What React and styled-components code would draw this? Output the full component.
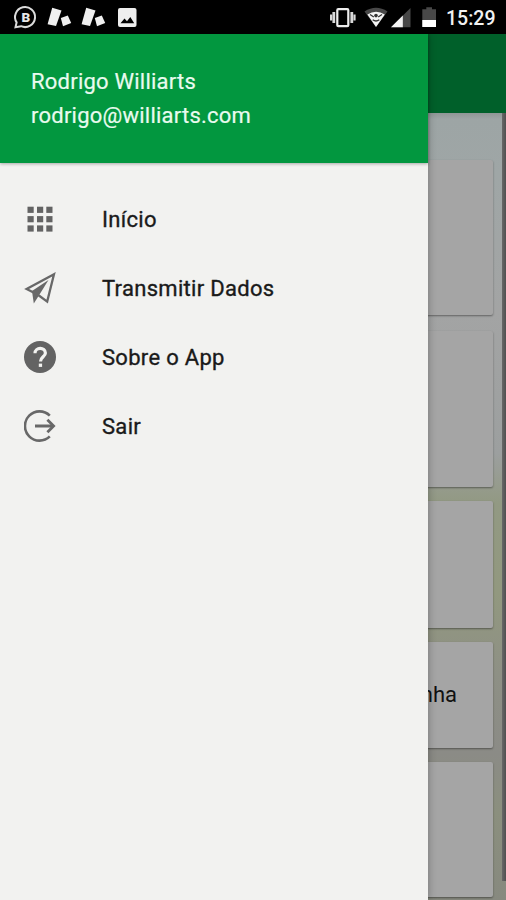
import React from "react"
import styled, { createGlobalStyle } from "styled-components"

const cards = [
  { height: 155, gap: 0 },
  { height: 156, gap: 16 },
  { height: 127, gap: 14 },
  { height: 106, gap: 14, label: "Senha da Minha" },
  { height: 135, gap: 14 },
]

const GridIcon = () => (
  <svg width="32" height="32" viewBox="0 0 32 32" fill="#636363">
    {[3.7, 13.1, 22.4].map(y =>
      [3.5, 13, 22.3].map(x => (
        <rect key={`${x}-${y}`} x={x} y={y} width="6.2" height="6.2" />
      ))
    )}
  </svg>
)

const PlaneIcon = () => (
  <svg width="32" height="32" viewBox="0 0 32 32" fill="none" stroke="#686868">
    <path d="M30 2.2 L2.6 17 L9.5 20.6 L15.6 24 L23.2 29.6 Z" strokeWidth="2.3" />
    <path d="M8 18.9 L24.5 7.9 L14.9 23.6 L9.8 31.4 Z" fill="#686868" stroke="none" />
  </svg>
)

const HelpIcon = () => (
  <svg width="32" height="32" viewBox="0 0 32 32">
    <circle cx="16" cy="16" r="16" fill="#636363" />
    <path
      d="M11 12.3 C11 5.7 21.4 5.9 21.4 12 C21.4 15.7 16.5 16 16.5 20.5"
      fill="none"
      stroke="#f2f2f0"
      strokeWidth="3.2"
    />
    <rect x="14.8" y="22.6" width="3.3" height="3.3" fill="#f2f2f0" />
  </svg>
)

const ExitIcon = () => (
  <svg width="32" height="32" viewBox="0 0 32 32" fill="none" stroke="#686868" strokeWidth="2.6">
    <path d="M25.8 5.6 A14.6 14.6 0 1 0 25.8 26.4" />
    <path d="M11 16 H29" strokeWidth="3" />
    <path d="M23.4 9.8 L29.6 16 L23.4 22.2" strokeWidth="2.8" />
  </svg>
)

const NotificationIcons = () => (
  <svg width="140" height="34" viewBox="0 0 140 34">
    <path
      d="M15.5 27.3 L16.6 22.4 A10 10 0 1 1 21 26.2 Z"
      fill="none"
      stroke="#dcdcdc"
      strokeWidth="2"
    />
    <text x="25.8" y="21.8" textAnchor="middle" fontFamily="Roboto, sans-serif" fontWeight="900" fontSize="13.5" fill="#e6e6e6">
      B
    </text>
    {[0, 34].map(x => (
      <g key={x} transform={`translate(${x} 0)`} fill="#f0f0f0">
        <path d="M52.2 7.8 L61.5 10.6 L56 26 L47.6 24.2 Z" />
        <path d="M60.8 18 L67.8 15.4 L71.2 23 L63 26.3 Z" />
      </g>
    ))}
    <rect x="118" y="8" width="18.5" height="19" rx="2" fill="#eeeeee" />
    <path d="M120.5 23.3 L124.5 18.6 L127 21.2 L130.3 17 L134.2 23.3 Z" fill="#000" />
  </svg>
)

const SystemIcons = () => (
  <svg width="110" height="34" viewBox="330 0 110 34">
    <g fill="#d8d8d8">
      <rect x="330" y="14.5" width="2.2" height="6" />
      <rect x="332.4" y="12" width="2.8" height="11" />
      <rect x="350.4" y="12" width="2.8" height="11" />
      <rect x="353.4" y="14.5" width="2.2" height="6" />
    </g>
    <rect x="337.3" y="9.2" width="11" height="17" rx="1" fill="none" stroke="#eeeeee" strokeWidth="2.2" />
    <path d="M364.5 11.5 Q376 4 387.5 11.5 L376 27 Z" fill="#484848" />
    <path d="M367.4 14.4 Q376 9 384.8 14.4 L376 27 Z" fill="#f4f4f4" />
    <path d="M370 14.5 L373.8 17 M382 14.5 L378.2 17 M372.7 19.8 Q376 22.2 379.3 19.8" fill="none" stroke="#333" strokeWidth="1.3" />
    <circle cx="376" cy="15.6" r="1.8" fill="#333" />
    <path d="M391 27.3 L410.5 8 V27.3 Z" fill="#484848" />
    <path d="M391 27.3 L402.8 15.6 V27.3 Z" fill="#f4f4f4" />
    <path d="M422.3 9.2 H426.3 V7.3 H432 V9.2 H436 V27 H422.3 Z" fill="#484848" />
    <rect x="422.3" y="20" width="13.7" height="7" fill="#ffffff" />
  </svg>
)

const menu = [
  { label: "Início", Icon: GridIcon },
  { label: "Transmitir Dados", Icon: PlaneIcon },
  { label: "Sobre o App", Icon: HelpIcon },
  { label: "Sair", Icon: ExitIcon },
]

const App = () => {
  return (
    <Screen>
      <GlobalStyle />
      <StatusBar>
        <NotificationIcons />
        <StatusRight>
          <SystemIcons />
          <Clock>15:29</Clock>
        </StatusRight>
      </StatusBar>
      <Body>
        <Page>
          <Toolbar />
          <PageContent>
            <CardList>
              {cards.map((card, i) => (
                <Card key={i} $height={card.height} $gap={card.gap}>
                  {card.label}
                </Card>
              ))}
            </CardList>
            <ScrollThumb />
          </PageContent>
        </Page>
        <Drawer>
          <Profile>
            <ProfileLine>Rodrigo Williarts</ProfileLine>
            <ProfileLine>rodrigo@williarts.com</ProfileLine>
          </Profile>
          <Menu>
            {menu.map(({ label, Icon }) => (
              <MenuItem key={label}>
                <Icon />
                <MenuLabel>{label}</MenuLabel>
              </MenuItem>
            ))}
          </Menu>
        </Drawer>
      </Body>
    </Screen>
  )
}

export default App

const GlobalStyle = createGlobalStyle`
  * {
    box-sizing: border-box;
  }
  body {
    margin: 0;
    font-family: Roboto, "Liberation Sans", sans-serif;
  }
`
const Screen = styled.div`
  display: flex;
  flex-direction: column;
  width: 506px;
  height: 900px;
  overflow: hidden;
  background: #000;
`
const StatusBar = styled.header`
  display: flex;
  justify-content: space-between;
  flex: none;
  height: 34px;
  padding-right: 11px;
  background: #000;
`
const StatusRight = styled.div`
  display: flex;
  gap: 6px;
`
const Clock = styled.span`
  padding-top: 2px;
  color: #f2f2f2;
  font-size: 19.5px;
  font-weight: 500;
  line-height: 33px;
  width: 49px;
  white-space: nowrap;
`
const Body = styled.div`
  position: relative;
  flex: 1;
  min-height: 0;
`
const Page = styled.main`
  display: flex;
  flex-direction: column;
  height: 100%;
`
const Toolbar = styled.div`
  flex: 0 0 79px;
  background: #00602a;
`
const PageContent = styled.div`
  display: flex;
  justify-content: space-between;
  flex: 1;
  min-height: 0;
  background: linear-gradient(
    #8f9696 0,
    #9da5a5 6px,
    #9fa6a6 60px,
    #a3a4a4 200px,
    #9c9f9f 340px,
    #929983 390px,
    #92987f 480px,
    #8e9085 560px,
    #8b8b86 640px,
    #8b8f7e 700px,
    #87897f 787px
  );
`
const CardList = styled.div`
  flex: 1;
  padding: 47px 9px 0 13px;
`
const Card = styled.section`
  display: flex;
  justify-content: flex-end;
  align-items: center;
  height: ${props => props.$height}px;
  margin-top: ${props => props.$gap}px;
  padding: 0 36px 2px 0;
  border-radius: 2px;
  background: #a5a5a5;
  box-shadow: 0 1px 2px rgba(0, 0, 0, 0.4);
  color: #111;
  font-size: 22px;
`
const ScrollThumb = styled.div`
  width: 4px;
  height: 768px;
  background: linear-gradient(90deg, #686868, #505050);
`
const Drawer = styled.aside`
  position: absolute;
  top: 0;
  left: 0;
  bottom: 0;
  width: 428px;
  background: #f2f2f0;
  box-shadow: 0 0 8px rgba(0, 0, 0, 0.3);
`
const Profile = styled.div`
  height: 129px;
  padding: 31px 31px 0;
  background: #02973f;
  box-shadow: 0 1px 3px rgba(0, 0, 0, 0.3);
`
const ProfileLine = styled.p`
  margin: 0;
  color: #e9fbef;
  font-size: 22px;
  line-height: 34px;
  letter-spacing: 0.23px;
  -webkit-text-stroke: 0.2px #e9fbef;
`
const Menu = styled.nav`
  padding-top: 21px;
`
const MenuItem = styled.a`
  display: flex;
  align-items: center;
  gap: 46px;
  height: 69px;
  padding-left: 24px;
`
const MenuLabel = styled.span`
  padding-top: 2px;
  color: #1a1a1a;
  font-size: 22px;
  font-weight: 400;
  letter-spacing: 0.3px;
  -webkit-text-stroke: 0.35px #1a1a1a;
`
